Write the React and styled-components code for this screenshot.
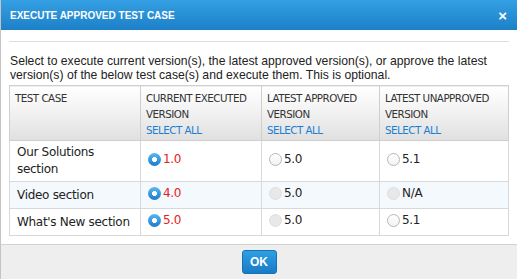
import React from 'react'
import styled, { createGlobalStyle } from 'styled-components'

const GlobalStyle = createGlobalStyle`
  html, body {
    margin: 0;
    padding: 0;
    background: #fff;
  }
`;

const Dialog = styled.div`
  width: 517px;
  height: 279px;
  display: flex;
  flex-direction: column;
  border-left: 1px solid #c4c4c4;
  box-sizing: border-box;
  font-family: 'Liberation Sans', Arial, sans-serif;
  overflow: hidden;
`;

const Header = styled.div`
  height: 30px;
  flex-shrink: 0;
  display: flex;
  align-items: center;
  justify-content: space-between;
  padding: 0 10px 0 9px;
  background: linear-gradient(to bottom, #35a0e3, #1c80c8);
  color: #fff;
`;

const Title = styled.span`
  font-size: 10px;
  font-weight: bold;
`;

const Close = styled.span`
  font-size: 15px;
  font-weight: bold;
  line-height: 1;
`;

const Body = styled.div`
  flex: 1;
  padding: 11px 8px 0 8px;
  background: #fff;
`;

const Divider = styled.div`
  border-top: 1px solid #dcdcdc;
`;

const Intro = styled.p`
  margin: 12px 0 0 1px;
  font-size: 12.2px;
  line-height: 14px;
  color: #222;
`;

const Table = styled.table`
  margin: 3px 0 0 0;
  border-collapse: collapse;
  width: 499px;
  table-layout: fixed;
  font-family: 'DejaVu Sans', Verdana, sans-serif;
  color: #222;
`;

const HeadCell = styled.th`
  text-align: left;
  vertical-align: top;
  font-weight: normal;
  font-size: 10.3px;
  letter-spacing: -0.5px;
  line-height: 16px;
  padding: 4px 5px 2px 5px;
  border: 1px solid #cfcfcf;
  background: linear-gradient(to bottom, #ffffff 0%, #f7f7f7 30%, #e0e0e0 100%);
  color: #333;
  height: 54px;
  box-sizing: border-box;
`;

const SelectAll = styled.div`
  color: #1a7fd2;
`;

const Row = styled.tr`
  background: ${p => (p.$alt ? '#f3f9fd' : '#fff')};
`;

const Cell = styled.td`
  border: 1px solid #d8d8d8;
  padding: 3px 7px;
  font-size: 12px;
  letter-spacing: -0.3px;
  line-height: 17px;
  vertical-align: middle;
`;

const Option = styled.span`
  display: inline-flex;
  align-items: center;
  gap: 2px;
  color: ${p => (p.$checked ? '#e8201c' : '#222')};
`;

const Radio = styled.span`
  width: 13px;
  height: 13px;
  border-radius: 50%;
  box-sizing: border-box;
  display: inline-block;
  flex-shrink: 0;
  ${p =>
    p.$checked
      ? `background: radial-gradient(circle, #ffffff 0 2.2px, transparent 2.8px), linear-gradient(to bottom, #5cb8ee, #1a7ccd);`
      : p.$disabled
      ? `background: #e8e8e8; border: 1px solid #dedede;`
      : `background: linear-gradient(to bottom, #fff, #f2f2f2); border: 1px solid #b8b8b8;`}
`;

const Footer = styled.div`
  height: 35px;
  flex-shrink: 0;
  background: #eeeeee;
  border-top: 1px solid #d2d2d2;
  display: flex;
  justify-content: center;
  align-items: flex-start;
  padding-top: 5px;
  box-sizing: border-box;
`;

const OkButton = styled.button`
  width: 35px;
  height: 24px;
  border: 1px solid #1670b4;
  border-radius: 3px;
  background: linear-gradient(to bottom, #2e9fe3, #1a7bc6);
  color: #fff;
  font-family: 'Liberation Sans', Arial, sans-serif;
  font-weight: bold;
  font-size: 12px;
  padding: 0;
`;

const Choice = ({ value, checked, disabled }) => (
  <Option $checked={checked}>
    <Radio $checked={checked} $disabled={disabled} />
    {value}
  </Option>
);

const rows = [
  { name: 'Our Solutions section', cur: '1.0', approved: '5.0', unapproved: '5.1', approvedDisabled: false, unDisabled: false },
  { name: 'Video section', cur: '4.0', approved: '5.0', unapproved: 'N/A', approvedDisabled: true, unDisabled: true },
  { name: "What's New section", cur: '5.0', approved: '5.0', unapproved: '5.1', approvedDisabled: true, unDisabled: false },
];

const App = () => {
  return (
    <>
      <GlobalStyle />
      <Dialog>
        <Header>
          <Title>EXECUTE APPROVED TEST CASE</Title>
          <Close>×</Close>
        </Header>
        <Body>
          <Divider />
          <Intro>
            Select to execute current version(s), the latest approved version(s), or approve the latest
            version(s) of the below test case(s) and execute them. This is optional.
          </Intro>
          <Table>
            <colgroup>
              <col style={{ width: 131 }} />
              <col style={{ width: 121 }} />
              <col style={{ width: 118 }} />
              <col style={{ width: 129 }} />
            </colgroup>
            <thead>
              <tr>
                <HeadCell>TEST CASE</HeadCell>
                <HeadCell>
                  CURRENT EXECUTED VERSION
                  <SelectAll>SELECT ALL</SelectAll>
                </HeadCell>
                <HeadCell>
                  LATEST APPROVED VERSION
                  <SelectAll>SELECT ALL</SelectAll>
                </HeadCell>
                <HeadCell>
                  LATEST UNAPPROVED VERSION
                  <SelectAll>SELECT ALL</SelectAll>
                </HeadCell>
              </tr>
            </thead>
            <tbody>
              {rows.map((r, i) => (
                <Row key={r.name} $alt={i === 1}>
                  <Cell>{r.name}</Cell>
                  <Cell>
                    <Choice value={r.cur} checked />
                  </Cell>
                  <Cell>
                    <Choice value={r.approved} disabled={r.approvedDisabled} />
                  </Cell>
                  <Cell>
                    <Choice value={r.unapproved} disabled={r.unDisabled} />
                  </Cell>
                </Row>
              ))}
            </tbody>
          </Table>
        </Body>
        <Footer>
          <OkButton>OK</OkButton>
        </Footer>
      </Dialog>
    </>
  )
}

export default App
